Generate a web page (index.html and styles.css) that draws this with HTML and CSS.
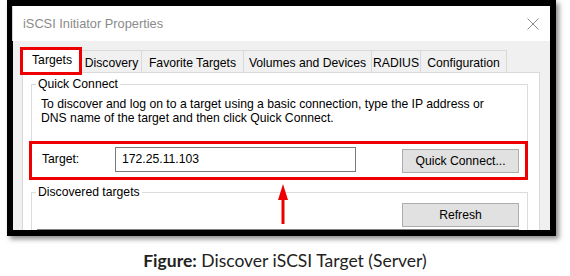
FILE: index.html
```html
<!DOCTYPE html>
<html lang="en">
<head>
	<meta charset="UTF-8">
	<title>Discover iSCSI Target</title>
	<link rel="stylesheet" href="styles.css">
</head>
<body>

<!-- screenshot of the dialog -->
	<div class="shot">

		<div class="frame">

			<div class="titlebar">
				<span class="title">iSCSI Initiator Properties</span>
				<svg class="close" width="12" height="12" viewBox="0 0 12 12">
					<path d="M0.5 0.5 L11.5 11.5 M11.5 0.5 L0.5 11.5" stroke="#8c8c8c" stroke-width="1" fill="none"/>
				</svg>
			</div>

			<div class="dialog">

				<div class="tabs">
					<div class="tab tab-active" style="width: 60px">Targets</div>
					<div class="tab" style="width: 61px">Discovery</div>
					<div class="tab" style="width: 103px">Favorite Targets</div>
					<div class="tab" style="width: 129px">Volumes and Devices</div>
					<div class="tab" style="width: 50px">RADIUS</div>
					<div class="tab" style="width: 87px">Configuration</div>
				</div>

				<div class="pane">

					<fieldset class="group group-quick">
						<legend>Quick Connect</legend>
						<p class="hint">To discover and log on to a target using a basic connection, type the IP address or<br>DNS name of the target and then click Quick Connect.</p>
						<div class="target-row">
							<label class="target-label">Target:</label>
							<div class="target-input">172.25.11.103</div>
							<button class="btn btn-quick">Quick Connect...</button>
						</div>
					</fieldset>

					<fieldset class="group group-found">
						<legend>Discovered targets</legend>
						<div class="refresh-row">
							<button class="btn">Refresh</button>
						</div>
						<div class="target-list"></div>
					</fieldset>

				</div>
			</div>

			<!-- red annotations drawn over the dialog -->
			<div class="mark mark-tab"></div>
			<div class="mark mark-target"></div>
			<svg class="arrow" width="10" height="40" viewBox="0 0 10 40">
				<polygon points="0,16 5,0 10,16" fill="#ee0000"/>
				<rect x="3.5" y="14" width="3" height="26" fill="#ee0000"/>
			</svg>

		</div>

		<p class="caption"><b>Figure:</b> Discover iSCSI Target (Server)</p>

	</div>

</body>
</html>
```

FILE: styles.css
```css
        body {
            margin: 0px;
            background: #ffffff;
            font-family: "Liberation Sans", Arial, sans-serif;
            font-size: 12.2px;
            color: #000000;
        }

        p {
            margin: 0px;
        }

        .shot {
            padding-left: 7px;
        }

        /* black frame round the window */
        .frame {
            position: relative;
            width: 537px;
            height: 224px;
            border: 6px solid #000000;
            box-shadow: 3px 3px 5px rgba(0, 0, 0, .45);
        }

        .titlebar {
            height: 35px;
            display: flex;
            align-items: center;
            justify-content: space-between;
            padding: 0px 11px 0px 10px;
            background: #ffffff;
            border-left: 1px solid #d4d4d4;
            margin-left: -1px;
        }

        .title {
            font-size: 12.8px;
            line-height: 35px;
            color: #8a8a8a;
        }

        .dialog {
            height: 189px;
            overflow: hidden;
            background: #f0f0f0;
        }

        /* tab strip */
        .tabs {
            display: flex;
            align-items: flex-end;
            padding: 6px 0px 0px 9px;
            position: relative;
            z-index: 1;
        }

        .tab {
            box-sizing: border-box;
            height: 22px;
            margin-right: -1px;
            padding-top: 5px;
            line-height: 14px;
            text-align: center;
            white-space: nowrap;
            background: #f0f0f0;
            border: 1px solid #d9d9d9;
            border-bottom: 0px;
        }

        .tab:last-child {
            margin-right: 0px;
        }

        .tab-active {
            height: 26px;
            margin-bottom: -1px;
            background: #ffffff;
        }

        .pane {
            height: 200px;
            margin: 0px 10px 0px 9px;
            background: #ffffff;
            border: 1px solid #d9d9d9;
        }

        /* group boxes */
        .group {
            margin: 4px 11px 0px 8px;
            padding: 0px 0px 5px 0px;
            border: 1px solid #dcdcdc;
            min-width: 0px;
        }

        .group legend {
            margin-left: 4px;
            padding: 0px 2px;
            line-height: 14px;
        }

        .group-found {
            margin-top: 6px;
        }

        .hint {
            margin: 6px 0px 0px 9px;
            line-height: 14px;
        }

        .target-row {
            display: flex;
            align-items: flex-start;
            margin-top: 22px;
        }

        .target-label {
            width: 73px;
            margin-left: 10px;
            line-height: 25px;
        }

        .target-input {
            box-sizing: border-box;
            width: 241px;
            height: 25px;
            padding-left: 6px;
            line-height: 23px;
            border: 1px solid #7a7a7a;
        }

        .btn {
            box-sizing: border-box;
            width: 117px;
            height: 24px;
            padding: 0px;
            font-family: inherit;
            font-size: 12.2px;
            line-height: 22px;
            color: #000000;
            background: #e1e1e1;
            border: 1px solid #adadad;
        }

        .btn-quick {
            margin: 2px 8px 0px auto;
        }

        .refresh-row {
            display: flex;
            justify-content: flex-end;
            padding-right: 8px;
            margin-top: 4px;
        }

        .target-list {
            height: 80px;
            margin: 2px 8px 0px 5px;
            border: 1px solid #828282;
        }

        /* red marks on top of the screenshot */
        .mark {
            position: absolute;
            z-index: 2;
            box-sizing: border-box;
            border: 3px solid #ee0000;
        }

        .mark-tab {
            left: 7px;
            top: 41px;
            width: 62px;
            height: 28px;
        }

        .mark-target {
            left: 16px;
            top: 135px;
            width: 499px;
            height: 39px;
        }

        .arrow {
            position: absolute;
            z-index: 2;
            left: 265px;
            top: 178px;
        }

        .caption {
            margin-top: 15px;
            padding-right: 7px;
            text-align: center;
            font-family: Lato, "Open Sans", sans-serif;
            font-size: 17.5px;
            line-height: 20px;
            color: #222222;
        }

        .caption b {
            font-weight: 700;
        }
```
